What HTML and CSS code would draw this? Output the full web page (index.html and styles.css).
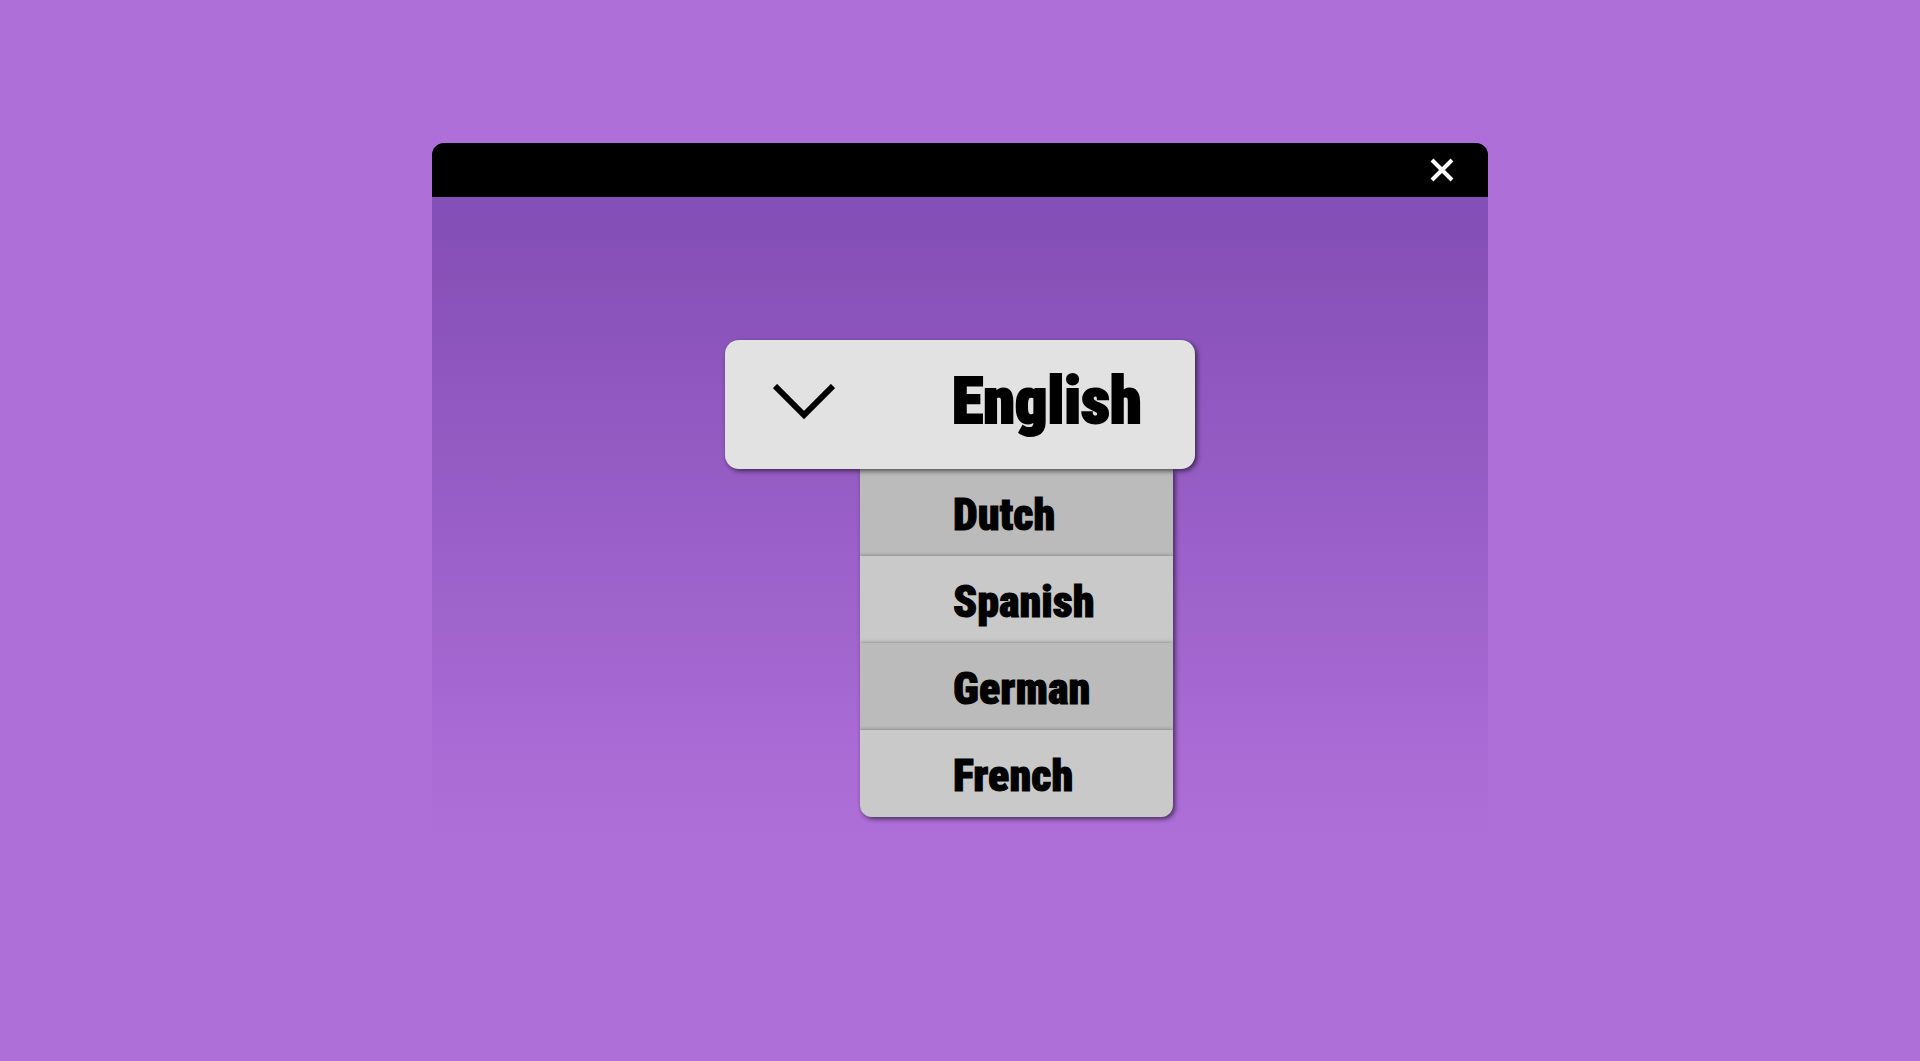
FILE: index.html
```html
<!DOCTYPE html>
<html lang="en">
<head>
    <meta charset="UTF-8">
    <meta name="viewport" content="width=device-width, initial-scale=1.0">
    <title>Language</title>
    <link rel="stylesheet" href="styles.css">
</head>
<body>
    <main class="window">
        <header class="window-bar">
            <button class="close-btn" type="button" aria-label="Close">
                <svg width="24" height="24" viewBox="0 0 24 24" fill="none" stroke="#fff" stroke-width="4">
                    <path d="M2 2L22 22M22 2L2 22"/>
                </svg>
            </button>
        </header>

        <div class="language">
            <button class="language-current" type="button" aria-haspopup="true" aria-expanded="true" aria-controls="languageMenu">
                <svg class="chevron" width="62" height="36" viewBox="0 0 62 36" fill="none" stroke="#000" stroke-width="6">
                    <path d="M2 2L31 31L60 2"/>
                </svg>
                <span>English</span>
            </button>
            <ul class="language-menu" id="languageMenu">
                <li><button class="language-option" type="button">Dutch</button></li>
                <li><button class="language-option" type="button">Spanish</button></li>
                <li><button class="language-option" type="button">German</button></li>
                <li><button class="language-option" type="button">French</button></li>
            </ul>
        </div>
    </main>
</body>
</html>
```
FILE: styles.css
```css
* {
    margin: 0;
    padding: 0;
    box-sizing: border-box;
}

body {
    font-family: Impact, 'Roboto Condensed', 'Liberation Sans Narrow', 'Liberation Sans', sans-serif;
    font-weight: 900;
    background: #ae6fd9;
    min-height: 100vh;
    padding-top: 143px;
    color: #000;
}

button {
    font: inherit;
    color: inherit;
    border: none;
    cursor: pointer;
}

.window {
    width: 55%;
    min-width: 520px;
    margin: 0 auto;
    padding-bottom: 42px;
    border-radius: 12px;
    background: linear-gradient(#844fb6 12%, #ab6cd6 88%, #ae6fd9);
    overflow: hidden;
}

.window-bar {
    display: flex;
    justify-content: flex-end;
    align-items: center;
    height: 54px;
    padding-right: 34px;
    background: #000;
}

.close-btn {
    display: flex;
    background: none;
}

/* Language picker */
.language {
    width: 470px;
    margin: 143px auto 0;
}

.language-current {
    position: relative;
    z-index: 1;
    display: flex;
    align-items: center;
    width: 100%;
    height: 129px;
    padding: 0 48px 6px;
    border-radius: 14px;
    background: #e2e2e2;
    box-shadow: 2px 2px 5px rgba(0, 0, 0, 0.6);
    font-size: 64px;
    -webkit-text-stroke: 2px #000;
}

.chevron {
    margin-right: 117px;
}

.language-menu {
    width: 313px;
    margin-left: 135px;
    list-style: none;
    border-radius: 0 0 12px 12px;
    box-shadow: 2px 2px 5px rgba(0, 0, 0, 0.6);
    overflow: hidden;
}

.language-option {
    display: block;
    width: 100%;
    height: 87px;
    padding: 4px 0 0 93px;
    background: #c9c9c9;
    box-shadow: 0 0 4px rgba(0, 0, 0, 0.4);
    font-size: 44px;
    text-align: left;
    -webkit-text-stroke: 1px #000;
}

.language-menu li:nth-child(odd) .language-option {
    background: #bbb;
}
```
